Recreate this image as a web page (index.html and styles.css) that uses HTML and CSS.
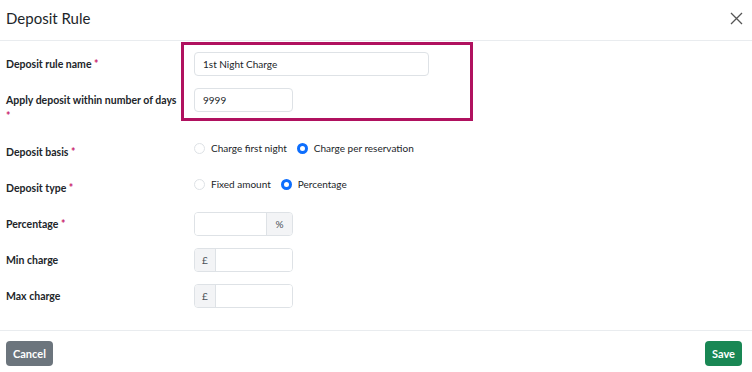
FILE: index.html
```html
<!DOCTYPE html>
<html lang="en">
<head>
  <meta charset="UTF-8">
  <meta name="viewport" content="width=device-width, initial-scale=1.0">
  <title>Deposit Rule</title>
  <link rel="stylesheet" href="styles.css">
</head>
<body>
  <div class="modal">
    <div class="modal-header">
      <h2>Deposit Rule</h2>
      <button class="close" aria-label="Close">
        <svg width="13" height="13" viewBox="0 0 13 13"><path d="M1 1L12 12M12 1L1 12" stroke="#555" stroke-width="1.3" fill="none"/></svg>
      </button>
    </div>

    <div class="modal-body">
      <!-- annotation box round the first two fields -->
      <div class="highlight"></div>

      <div class="row">
        <label class="label">Deposit rule name <span class="req">*</span></label>
        <input class="field wide" type="text" value="1st Night Charge">
      </div>

      <div class="row">
        <label class="label label-wrap">Apply deposit within number of days <span class="req">*</span></label>
        <input class="field short" type="text" value="9999">
      </div>

      <div class="row row-radio">
        <label class="label">Deposit basis <span class="req">*</span></label>
        <div class="radios">
          <span class="radio"><span class="dot"></span>Charge first night</span>
          <span class="radio"><span class="dot on"></span>Charge per reservation</span>
        </div>
      </div>

      <div class="row row-radio last-radio">
        <label class="label">Deposit type <span class="req">*</span></label>
        <div class="radios">
          <span class="radio"><span class="dot"></span>Fixed amount</span>
          <span class="radio"><span class="dot on"></span>Percentage</span>
        </div>
      </div>

      <div class="row">
        <label class="label">Percentage <span class="req">*</span></label>
        <div class="group">
          <input class="group-input" type="text">
          <span class="addon addon-right">%</span>
        </div>
      </div>

      <div class="row">
        <label class="label">Min charge</label>
        <div class="group">
          <span class="addon addon-left">£</span>
          <input class="group-input" type="text">
        </div>
      </div>

      <div class="row">
        <label class="label">Max charge</label>
        <div class="group">
          <span class="addon addon-left">£</span>
          <input class="group-input" type="text">
        </div>
      </div>
    </div>

    <div class="modal-footer">
      <button class="btn btn-cancel">Cancel</button>
      <button class="btn btn-save">Save</button>
    </div>
  </div>
</body>
</html>
```

FILE: styles.css
```css
body {
  margin: 0;
  background: #fff;
  color: #212529;
  font-family: Lato, "Liberation Sans", sans-serif;
  font-size: 10.5px;
}
.modal {
  width: 752px;
  height: 372px;
  display: flex;
  flex-direction: column;
  overflow: hidden;
}
.modal-header {
  flex-shrink: 0;
  height: 40px;
  display: flex;
  align-items: center;
  justify-content: space-between;
  padding: 0 9px 0 6px;
  border-bottom: 1px solid #e9ecef;
}
.modal-header h2 {
  margin: 0 0 5px;
  font-size: 15px;
  font-weight: 400;
  color: #212529;
}
.close {
  border: none;
  background: none;
  padding: 0;
  margin-bottom: 4px;
  display: flex;
  cursor: pointer;
}
.modal-body {
  position: relative;
  flex: 1;
  padding: 11px 6px 0;
}
.highlight {
  position: absolute;
  left: 181px;
  top: 1px;
  width: 286px;
  height: 73px;
  border: 3px solid #b0115f;
}
.row {
  display: flex;
  align-items: flex-start;
  margin-bottom: 12px;
}
.label {
  width: 188px;
  flex-shrink: 0;
  font-weight: 700;
  line-height: 24px;
}
.label-wrap {
  line-height: 16px;
  padding-top: 4px;
}
.label-wrap .req {
  display: block;
}
.req {
  color: #c8176b;
}
.field {
  height: 24px;
  box-sizing: border-box;
  border: 1px solid #dee2e6;
  border-radius: 4px;
  padding: 0 8px;
  font-family: inherit;
  font-size: 10px;
  color: #212529;
}
.wide {
  width: 235px;
}
.short {
  width: 99px;
}
.row-radio .label {
  line-height: 16px;
  padding-top: 8px;
}
.last-radio {
  margin-bottom: 16px;
}
.radios {
  display: flex;
  gap: 10px;
  height: 24px;
  align-items: center;
}
.radio {
  display: flex;
  align-items: center;
  gap: 6px;
  color: #212529;
  font-size: 10px;
}
.dot {
  width: 11px;
  height: 11px;
  box-sizing: border-box;
  border: 1px solid #dee2e6;
  border-radius: 50%;
  background: #fff;
}
.dot.on {
  border: 3px solid #0d6efd;
}
.group {
  display: flex;
  width: 99px;
  height: 24px;
  box-sizing: border-box;
  border: 1px solid #dee2e6;
  border-radius: 4px;
  overflow: hidden;
}
.group-input {
  flex: 1;
  min-width: 0;
  border: none;
  padding: 0 8px;
  font-family: inherit;
  font-size: 10px;
}
.addon {
  display: flex;
  align-items: center;
  justify-content: center;
  background: #f3f4f6;
  color: #495057;
  font-size: 10px;
}
.addon-right {
  width: 25px;
  border-left: 1px solid #dee2e6;
}
.addon-left {
  width: 20px;
  border-right: 1px solid #dee2e6;
}
.modal-footer {
  flex-shrink: 0;
  display: flex;
  justify-content: space-between;
  align-items: flex-start;
  padding: 10px 10px 0 6px;
  height: 31px;
  border-top: 1px solid #e9ecef;
}
.btn {
  height: 25px;
  border: none;
  border-radius: 4px;
  padding: 0 7px;
  color: #fff;
  font-family: inherit;
  font-size: 11px;
  font-weight: 700;
  cursor: pointer;
}
.btn-cancel {
  background: #6c757d;
}
.btn-save {
  background: #198754;
}
```
